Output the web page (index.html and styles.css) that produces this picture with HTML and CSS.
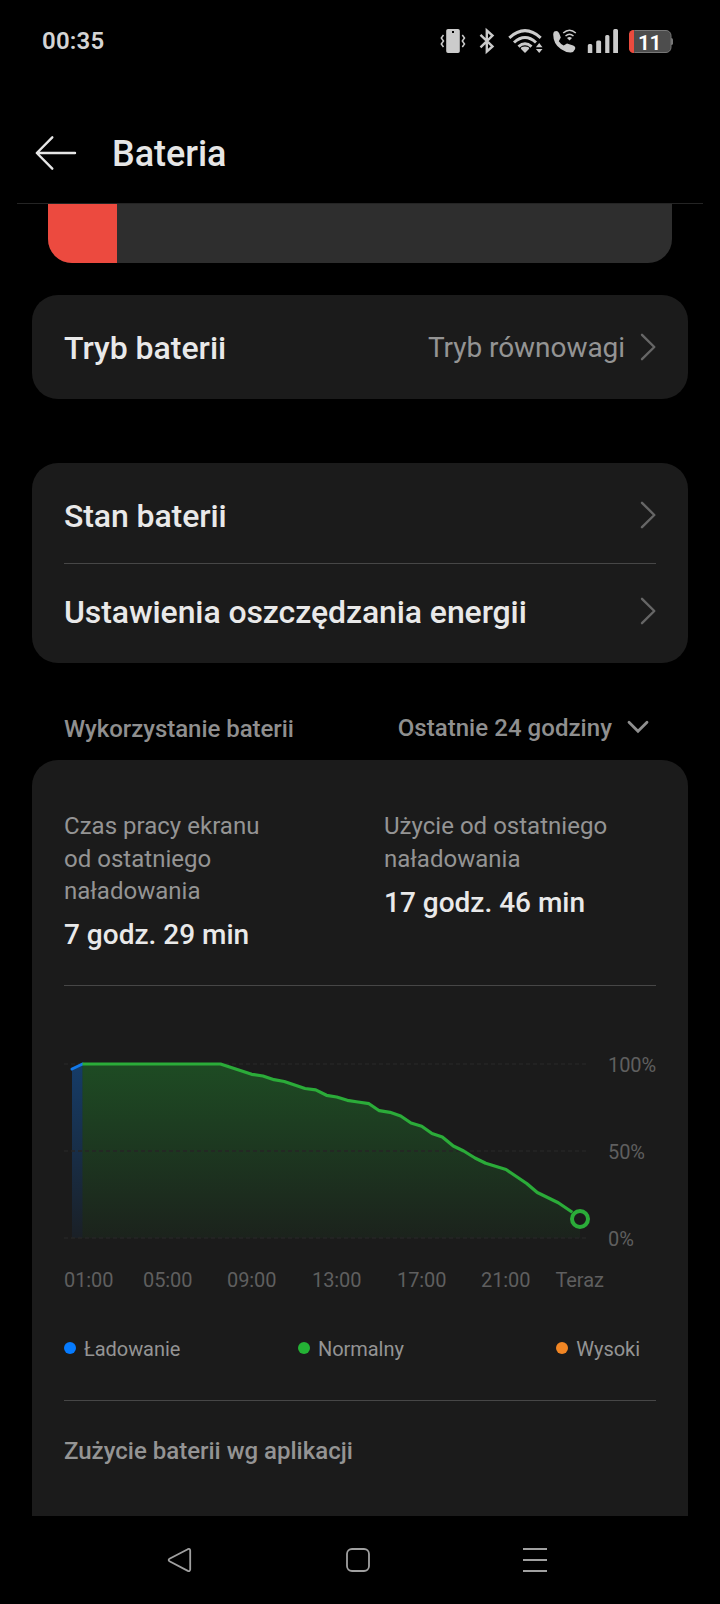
FILE: index.html
```html
<!DOCTYPE html>
<html lang="pl">
<head>
<meta charset="utf-8">
<title>Bateria</title>
<link rel="stylesheet" href="styles.css">
</head>
<body>
<div class="screen">
  <div class="status">
    <span class="clock">00:35</span>
    <svg class="status-icons" width="240" height="32" viewBox="436 25 240 32">
      <g fill="#cbcbcb">
        <path fill-rule="evenodd" d="M448 29h10a1.800 1.800 0 0 1 1.800 1.800v20.400a1.800 1.800 0 0 1-1.800 1.800h-10a1.800 1.800 0 0 1-1.800-1.800V30.800A1.800 1.800 0 0 1 448 29zm4 2v2h2v-2z"/>
        <path d="M587.800 45.500q0-1.500 1.500-1.500h1.500q1.500 0 1.500 1.500V53h-4.500zM596.200 42q0-1.500 1.500-1.500h1.900q1.500 0 1.500 1.500v11h-4.900zM605.200 36.500q0-1.500 1.500-1.500h1.200q1.500 0 1.500 1.500V53h-4.200zM613.200 30.500q0-1.500 1.500-1.500h1.800q1.500 0 1.500 1.500V53h-4.800z"/>
        <path d="M525 53l-4.200-4.300q0-2.200 4.200-2.200t4.200 2.200z"/>
        <path d="M539.200 43l3.300 4.300h-6.600zM539.200 53l3.300-4h-6.600z"/>
        <path d="M554.300 31.500q3.200-1.700 4.900 1.800l1.600 4.300-2 3.600q2 3 4.900 4.400l3.300-2 6.200 2q2.800 1.200 1.800 3.600-1.200 3-4.200 3.300-5 .2-10-3.400Q553.300 44 553.200 34.500q0-2 1.100-3z"/>
        <path d="M569.500 40.500l-2.500-2.500q2.500-2 5 0z"/>
      </g>
      <g fill="none" stroke="#cbcbcb" stroke-width="2">
        <path d="M443.500 35l-2.200 3 2.200 3-2.200 3 2.200 3M462.300 35l2.200 3-2.200 3 2.200 3-2.200 3" stroke-width="1.500"/>
        <path d="M480.500 34.800L492.500 46.500 486.800 51.500V30.500L492.500 35.500 480.500 47.300" stroke-width="2.400"/>
        <path d="M509.300 37.800Q525 23.500 540.700 37.800M514 42.500Q525 32.500 536 42.500M518.500 46.600Q525 41 531.500 46.600" stroke-width="3"/>
        <path d="M563.200 33Q569.500 27.500 575.800 33M565.500 36Q569.500 32.500 573.500 36" stroke-width="1.500"/>
      </g>
      <path d="M671 38q2 0 2 1.500v4q0 1.500-2 1.500z" fill="#777"/>
      <rect x="629.500" y="30.500" width="41.500" height="22" rx="5" fill="#4d4d4d" stroke="#777"/>
      <path d="M634 53h-.5a4.500 4.500 0 0 1-4.500-4.500v-14a4.500 4.500 0 0 1 4.500-4.500h.5z" fill="#eb4b3e"/>
      <text class="battery-level" x="649.500" y="50">11</text>
    </svg>
  </div>

  <header class="header">
    <svg class="back" width="44" height="40" viewBox="34 133 44 40">
      <path d="M75 153H37M52.300 137.300L36.800 153l15.500 15.700"/>
    </svg>
    <h1 class="title">Bateria</h1>
  </header>

  <main class="content">
    <div class="charge"><div class="charge-fill"></div></div>

    <section class="card card-mode">
      <div class="row">
        <span class="row-label">Tryb baterii</span>
        <span class="row-value">Tryb równowagi</span>
        <svg class="chevron" width="16" height="28" viewBox="0 0 16 28"><path d="M2 1.800L14.300 14 2 26.200"/></svg>
      </div>
    </section>

    <section class="card card-links">
      <div class="row">
        <span class="row-label">Stan baterii</span>
        <svg class="chevron" width="16" height="28" viewBox="0 0 16 28"><path d="M2 1.800L14.300 14 2 26.200"/></svg>
      </div>
      <div class="divider"></div>
      <div class="row row-second">
        <span class="row-label">Ustawienia oszczędzania energii</span>
        <svg class="chevron" width="16" height="28" viewBox="0 0 16 28"><path d="M2 1.800L14.300 14 2 26.200"/></svg>
      </div>
    </section>

    <div class="section-head">
      <span class="section-title">Wykorzystanie baterii</span>
      <span class="range">Ostatnie 24 godziny
        <svg class="caret" width="22" height="16" viewBox="0 0 22 16"><path d="M2 2.200l9 9 9-9"/></svg>
      </span>
    </div>

    <section class="card card-usage">
      <div class="stats">
        <div class="stat">
          <p class="stat-label">Czas pracy ekranu<br>od ostatniego<br>naładowania</p>
          <p class="stat-value">7 godz. 29 min</p>
        </div>
        <div class="stat">
          <p class="stat-label">Użycie od ostatniego<br>naładowania</p>
          <p class="stat-value">17 godz. 46 min</p>
        </div>
      </div>
      <div class="divider"></div>

      <svg class="chart" width="592" height="260" viewBox="64 1040 592 260">
        <defs>
          <linearGradient id="green" gradientUnits="userSpaceOnUse" x1="0" y1="1064" x2="0" y2="1238">
            <stop offset="0" stop-color="#24b235" stop-opacity=".32"/>
            <stop offset="1" stop-color="#24b235" stop-opacity=".05"/>
          </linearGradient>
          <linearGradient id="blue" gradientUnits="userSpaceOnUse" x1="0" y1="1064" x2="0" y2="1238">
            <stop offset="0" stop-color="#0a7cff" stop-opacity=".34"/>
            <stop offset="1" stop-color="#0a7cff" stop-opacity=".05"/>
          </linearGradient>
        </defs>
        <path d="M72 1069L82.500 1064V1238H72z" fill="url(#blue)"/>
        <path d="M82.500 1064H220.500L251.700 1074.300 263 1076 274 1079.700 284.300 1081.500 305 1088.500 315.700 1089.900 326.500 1095.300 336.700 1097 347.300 1100.300 358 1102 369 1103.700 379.300 1110.700 390 1112.300 400.700 1116 411 1123 421.700 1126.300 432 1133.500 442.300 1137 453.300 1146 463.700 1151 475 1158 485.700 1163.300 506 1169.500 526.700 1183.500 537.300 1192.500 558.300 1202.700 572.300 1212.300 580 1219V1238H82.500z" fill="url(#green)"/>
        <path class="grid" d="M64 1064H587M64 1151H587M64 1238H587"/>
        <path d="M72 1069L82.500 1064" stroke="#1279ea" stroke-width="3" stroke-linecap="round"/>
        <path d="M82.500 1064H220.500L251.700 1074.300 263 1076 274 1079.700 284.300 1081.500 305 1088.500 315.700 1089.900 326.500 1095.300 336.700 1097 347.300 1100.300 358 1102 369 1103.700 379.300 1110.700 390 1112.300 400.700 1116 411 1123 421.700 1126.300 432 1133.500 442.300 1137 453.300 1146 463.700 1151 475 1158 485.700 1163.300 506 1169.500 526.700 1183.500 537.300 1192.500 558.300 1202.700 572.300 1212.300" fill="none" stroke="#2bac39" stroke-width="3.200" stroke-linejoin="round"/>
        <circle cx="580" cy="1219" r="8" fill="#1b1b1b" stroke="#2bac39" stroke-width="4"/>
        <g class="axis">
          <text x="608" y="1072">100%</text>
          <text x="608" y="1159">50%</text>
          <text x="608" y="1246">0%</text>
          <text x="64" y="1287">01:00</text>
          <text x="143" y="1287">05:00</text>
          <text x="227" y="1287">09:00</text>
          <text x="312" y="1287">13:00</text>
          <text x="397" y="1287">17:00</text>
          <text x="481" y="1287">21:00</text>
          <text x="555.500" y="1287">Teraz</text>
        </g>
      </svg>

      <div class="legend">
        <span class="legend-item"><i class="dot dot-blue"></i>Ładowanie</span>
        <span class="legend-item"><i class="dot dot-green"></i>Normalny</span>
        <span class="legend-item"><i class="dot dot-orange"></i>Wysoki</span>
      </div>
      <div class="divider"></div>
      <h2 class="apps-title">Zużycie baterii wg aplikacji</h2>
    </section>
  </main>

  <nav class="nav">
    <svg width="26" height="26" viewBox="0 0 26 26"><path d="M20.800 2.200L2.500 11.800q-1.700 1.200 0 2.400L20.800 23.800q2.200.8 2.400-1.300V3.500q-.2-2.100-2.400-1.300z"/></svg>
    <svg width="26" height="26" viewBox="0 0 26 26"><rect x="2" y="2" width="22" height="22" rx="5"/></svg>
    <svg width="26" height="26" viewBox="0 0 26 26"><path d="M1 2h24M1 13h24M1 24h24"/></svg>
  </nav>
</div>
</body>
</html>
```
FILE: styles.css
```css
* { box-sizing: border-box; margin: 0; padding: 0; }
body { background: #000; }
.screen {
  width: 720px; height: 1604px; overflow: hidden;
  display: flex; flex-direction: column;
  background: #000; color: #e9e9e9;
  font-family: Roboto, "Noto Sans", sans-serif;
}
svg { display: block; flex: none; }

.status {
  height: 82px; padding: 0 44px 0 42px;
  display: flex; align-items: center; justify-content: space-between;
}
.clock { font-size: 24px; font-weight: 600; letter-spacing: .2px; color: #d4d4d4; }
.battery-level { font-size: 21px; font-weight: 600; fill: #fff; text-anchor: middle; letter-spacing: -.6px; }

.header {
  height: 122px; margin: 0 17px; padding: 22px 0 0 17px;
  display: flex; align-items: center; gap: 34px;
  border-bottom: 1px solid #242424;
}
.back {
  margin-bottom: 2px;
  fill: none; stroke: #e6e6e6; stroke-width: 2.4;
  stroke-linecap: round; stroke-linejoin: round;
}
.title { font-size: 36px; font-weight: 500; line-height: 42px; letter-spacing: -.05px; color: #e6e6e6; }

.content { height: 1312px; padding: 0 32px; overflow: hidden; }
.charge {
  height: 59px; margin: 0 16px 32px; overflow: hidden;
  border-radius: 0 0 24px 24px; background: #2e2e2e;
}
.charge-fill { width: 11%; height: 100%; background: #ec4a3f; }

.card { background: #1b1b1b; border-radius: 26px; padding: 4px 32px; }
.card-mode { margin-bottom: 64px; }
.card-mode .row-label { letter-spacing: 0; }
.card-links { height: 200px; }
.row { height: 96px; display: flex; align-items: center; }
.row-second { height: 94px; }
.row-label { flex: 1; padding-top: 2px; font-size: 32px; font-weight: 500; letter-spacing: -.1px; }
.row-value { margin-right: 15px; font-size: 28px; letter-spacing: -.05px; color: #949494; }
.chevron path {
  fill: none; stroke: #666; stroke-width: 2.4;
  stroke-linecap: round; stroke-linejoin: round;
}
.divider { height: 1px; background: #474747; }

.section-head {
  height: 97px; padding: 33px 39px 0 32px;
  display: flex; align-items: center; justify-content: space-between;
  font-size: 24px; font-weight: 500; color: #8f8f8f;
}
.section-title { padding-top: 2px; letter-spacing: -.05px; }
.range { display: flex; align-items: center; gap: 15px; letter-spacing: .05px; }
.caret { fill: none; stroke: #8f8f8f; stroke-width: 2.8; stroke-linecap: round; }

.card-usage { height: 756px; padding: 0 32px; border-radius: 26px 26px 0 0; }
.stats {
  height: 225px; padding-top: 50px;
  display: grid; grid-template-columns: 320px 1fr;
}
.stat-label { font-size: 24px; line-height: 32.5px; letter-spacing: .02px; color: #949494; }
.stat-value { margin-top: 10.5px; font-size: 28px; font-weight: 500; line-height: 33px; }

.chart { margin-top: 54px; }
.grid { stroke: #262626; stroke-width: 1.5; stroke-dasharray: 4 3; }
.axis { font-size: 20px; fill: #5f5f5f; letter-spacing: -.1px; }

.legend {
  height: 100px; padding: 0 16px 2px 0;
  display: grid; grid-template-columns: 234px 1fr auto; align-items: center;
  font-size: 20px; color: #949494;
}
.legend-item { display: flex; align-items: center; gap: 8px; letter-spacing: -.05px; }
.dot { width: 12px; height: 12px; margin-top: -3px; border-radius: 50%; }
.dot-blue { background: #067bff; }
.dot-green { background: #24b235; }
.dot-orange { background: #f18624; }
.apps-title { padding-top: 34px; font-size: 24px; font-weight: 500; line-height: 32px; color: #949494; }

.nav {
  height: 88px; padding: 0 172px 0 167px;
  display: flex; align-items: center; justify-content: space-between;
}
.nav svg { fill: none; stroke: #a0a0a0; stroke-width: 1.8; }
```
